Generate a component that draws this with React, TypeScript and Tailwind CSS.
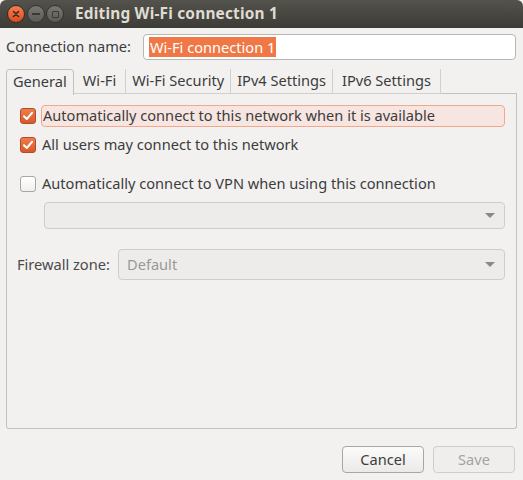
import React from "react";

function Check({ checked }: { checked: boolean }) {
  if (checked) {
    return (
      <div className="w-[16px] h-[16px] rounded-[3px] border border-[#b24c22] bg-gradient-to-b from-[#ee7d4e] to-[#d8582a] flex items-center justify-center shrink-0">
        <svg width="12" height="12" viewBox="0 0 12 12">
          <path d="M2 6.2 L4.8 9 L10 2.8" stroke="white" strokeWidth="2" fill="none" strokeLinecap="round" strokeLinejoin="round" />
        </svg>
      </div>
    );
  }
  return <div className="w-[16px] h-[16px] rounded-[3px] border border-[#a9a7a3] bg-gradient-to-b from-[#ffffff] to-[#f0efed] shrink-0" />;
}

function Arrow() {
  return (
    <svg width="10" height="6" viewBox="0 0 10 6">
      <path d="M0 0 L10 0 L5 5 Z" fill="#8b8985" />
    </svg>
  );
}

export default function App() {
  return (
    <div
      className="w-[523px] h-[480px] bg-[#f2f1f0] text-[#3c3c3c] text-[14.6px] flex flex-col overflow-hidden"
      style={{ fontFamily: '"Noto Sans", "Open Sans", sans-serif' }}
    >
      {/* title bar */}
      <div className="h-[28px] rounded-t-[6px] bg-gradient-to-b from-[#54524c] to-[#3c3b37] flex items-center pl-[7px] shrink-0">
        <div className="w-[18px] h-[18px] rounded-full bg-gradient-to-b from-[#f37d52] to-[#de4b17] border border-[#3a2a22] flex items-center justify-center">
          <svg width="8" height="8" viewBox="0 0 8 8">
            <path d="M1.5 1.5 L6.5 6.5 M6.5 1.5 L1.5 6.5" stroke="#3a2a22" strokeWidth="1.6" strokeLinecap="round" />
          </svg>
        </div>
        <div className="ml-[2px] w-[18px] h-[18px] rounded-full bg-gradient-to-b from-[#7a7873] to-[#5c5a55] border border-[#35332f] flex items-center justify-center">
          <div className="w-[8px] h-[2px] bg-[#3a3935]" />
        </div>
        <div className="ml-[1px] w-[18px] h-[18px] rounded-full bg-gradient-to-b from-[#7a7873] to-[#5c5a55] border border-[#35332f] flex items-center justify-center">
          <div className="w-[7px] h-[7px] border-[1.5px] border-[#3a3935] rounded-[1px]" />
        </div>
        <div className="ml-[11px] text-[#dfdbd2] font-bold text-[15.4px] tracking-[0.2px]">Editing Wi-Fi connection 1</div>
      </div>

      {/* connection name */}
      <div className="flex items-center mt-[6px] pl-[6px] pr-[7px] h-[26px]">
        <span className="w-[137px]">Connection name:</span>
        <div className="flex-1 h-[26px] rounded-[4px] border border-[#b8b6b2] bg-white flex items-center px-[5px]">
          <span className="bg-[#f07746] text-white px-[1px] leading-[20px]">Wi-Fi connection 1</span>
        </div>
      </div>

      {/* tabs + panel */}
      <div className="mx-[6px] mt-[8px] flex flex-col">
        <div className="flex h-[26px] items-end">
          <div className="h-[26px] px-[6px] flex items-center border border-b-0 border-[#c4c2bd] rounded-t-[4px] bg-[#f2f1f0] relative z-10 -mb-px pb-px">
            General
          </div>
          <div className="h-[25px] flex items-center px-[9px] border-r border-b border-[#d2d0cc]">Wi-Fi</div>
          <div className="h-[25px] flex items-center px-[6px] border-r border-b border-[#d2d0cc]">Wi-Fi Security</div>
          <div className="h-[25px] flex items-center px-[6px] border-r border-b border-[#d2d0cc]">IPv4 Settings</div>
          <div className="h-[25px] flex items-center px-[9px] border-r border-b border-[#d2d0cc]">IPv6 Settings</div>
          <div className="flex-1 h-[25px] border-b border-[#c4c2bd]" />
        </div>
        <div className="h-[335px] border border-t-0 border-[#c4c2bd] rounded-b-[3px] pl-[13px] pr-[11px] pt-[11px] flex flex-col">
          <div className="flex items-center h-[22px]">
            <Check checked />
            <div className="ml-[5px] flex-1 h-[22px] rounded-[4px] border border-[#f1a98a] bg-[#f6e5e0] flex items-center pl-[1px]">
              Automatically connect to this network when it is available
            </div>
          </div>
          <div className="flex items-center h-[22px] mt-[7px]">
            <Check checked />
            <span className="ml-[6px]">All users may connect to this network</span>
          </div>
          <div className="flex items-center h-[22px] mt-[17px]">
            <Check checked={false} />
            <span className="ml-[6px]">Automatically connect to VPN when using this connection</span>
          </div>
          <div className="ml-[24px] mt-[7px] h-[27px] rounded-[4px] border border-[#cfcdc9] bg-[#edeceb] flex items-center justify-end pr-[9px]">
            <Arrow />
          </div>
          <div className="flex items-center mt-[20px] h-[31px] -ml-[3px]">
            <span className="w-[101px] text-[#4a4a4a]">Firewall zone:</span>
            <div className="flex-1 h-[31px] rounded-[4px] border border-[#cfcdc9] bg-[#edeceb] flex items-center justify-between pl-[8px] pr-[9px]">
              <span className="text-[#9a9894]">Default</span>
              <Arrow />
            </div>
          </div>
        </div>
      </div>

      {/* buttons */}
      <div className="flex justify-end gap-[9px] pr-[8px] mt-[17px]">
        <div className="w-[82px] h-[27px] rounded-[4px] border border-[#a9a7a3] bg-gradient-to-b from-[#fbfbfa] to-[#ebeae8] flex items-center justify-center text-[#3c3c3c]">
          Cancel
        </div>
        <div className="w-[82px] h-[27px] rounded-[4px] border border-[#d0cecb] bg-[#efeeed] flex items-center justify-center text-[#a5a39f]">
          Save
        </div>
      </div>
    </div>
  );
}
